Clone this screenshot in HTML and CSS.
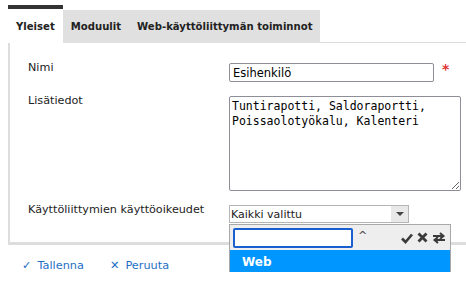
FILE: index.html
```html
<!DOCTYPE html>
<html lang="fi">
<head>
  <meta charset="UTF-8" />
  <title>Rooli</title>
  <link rel="stylesheet" href="styles.css">
</head>
<body>
  <div class="tabs">
    <div class="tab active">Yleiset</div>
    <div class="tab">Moduulit</div>
    <div class="tab">Web-käyttöliittymän toiminnot</div>
  </div>

  <div class="panel">
    <div class="form">
      <label class="label">Nimi</label>
      <div class="field">
        <input class="text-input" type="text" value="Esihenkilö">
        <span class="required">*</span>
      </div>

      <label class="label">Lisätiedot</label>
      <div class="field">
        <textarea class="textarea">Tuntirapotti, Saldoraportti, Poissaolotyökalu, Kalenteri</textarea>
      </div>

      <label class="label">Käyttöliittymien käyttöoikeudet</label>
      <div class="field">
        <div class="select">
          <span class="select-value">Kaikki valittu</span>
          <span class="select-arrow"></span>
        </div>
        <div class="dropdown">
          <div class="dropdown-head">
            <input class="search" type="text" autofocus>
            <span class="caret">^</span>
            <div class="tools">
              <svg width="12" height="12" viewBox="0 0 12 12"><path d="M1 6.5 L4.5 10 L11 2.5" fill="none" stroke="#3a3a3a" stroke-width="2.6"/></svg>
              <svg width="11" height="11" viewBox="0 0 11 11"><path d="M1.5 1.5 L9.5 9.5 M9.5 1.5 L1.5 9.5" stroke="#3a3a3a" stroke-width="2.8"/></svg>
              <svg width="14" height="12" viewBox="0 0 14 12"><path d="M1 4 H11 M8 1 L11.5 4 L8 7" fill="none" stroke="#3a3a3a" stroke-width="2"/><path d="M13 8 H3 M6 5 L2.5 8 L6 11" fill="none" stroke="#3a3a3a" stroke-width="2"/></svg>
            </div>
          </div>
          <div class="option selected">Web</div>
        </div>
      </div>
    </div>
  </div>

  <div class="actions">
    <a class="action" href="#"><span class="icon">✓</span>Tallenna</a>
    <a class="action" href="#"><span class="icon">✕</span>Peruuta</a>
  </div>
</body>
</html>
```

FILE: styles.css
```css
* {
  box-sizing: border-box;
  margin: 0;
  padding: 0;
}

body {
  font-family: 'DejaVu Sans', Verdana, sans-serif;
  font-size: 11px;
  color: #222;
  background: #fff;
}

.tabs {
  display: flex;
  align-items: flex-end;
  padding-left: 8px;
  padding-top: 5px;
}

.tab {
  height: 33px;
  padding: 0 8px;
  display: flex;
  align-items: center;
  background: #e0e0e0;
  font-weight: bold;
  font-size: 10.1px;
  color: #222;
}

.tab.active {
  height: 38px;
  background: #fff;
  border-top: 4px solid #333;
  padding-top: 1px;
}

.panel {
  margin-left: 8px;
  border-left: 2px solid #ddd;
  border-top: 1px solid #ddd;
  border-bottom: 3px solid #ddd;
  margin-top: -1px;
  padding: 20px 6px 19px 18px;
}

.form {
  display: grid;
  grid-template-columns: 201px 1fr;
  row-gap: 14px;
}

.label {
  line-height: 15px;
  margin-top: -3px;
  font-size: 11.2px;
}

.field {
  position: relative;
  display: flex;
  align-items: flex-start;
}

.text-input {
  width: 205px;
  height: 19px;
  border: 1px solid #8e8e99;
  border-radius: 2px;
  padding: 0 3px;
  font-family: 'DejaVu Sans', sans-serif;
  font-size: 11.5px;
  color: #000;
}

.required {
  color: #e03434;
  font-weight: bold;
  font-size: 14px;
  margin-left: 8px;
  line-height: 12px;
}

.textarea {
  width: 232px;
  height: 95px;
  border: 1px solid #8e8e99;
  border-radius: 2px;
  padding: 2px 2px;
  font-family: 'DejaVu Sans Mono', monospace;
  font-size: 11.5px;
  line-height: 15px;
  color: #000;
  resize: both;
}

.select {
  width: 180px;
  height: 18px;
  border: 1px solid #b5b5b5;
  display: flex;
  align-items: center;
  justify-content: space-between;
  padding-left: 1px;
}

.select-value {
  font-size: 11px;
}

.select-arrow {
  width: 17px;
  height: 16px;
  background: #e8e8e8;
  position: relative;
}

.select-arrow::after {
  content: "";
  position: absolute;
  left: 5px;
  top: 6px;
  border-left: 4px solid transparent;
  border-right: 4px solid transparent;
  border-top: 4px solid #444;
}

.dropdown {
  position: absolute;
  top: 19px;
  left: 0;
  width: 222px;
  border: 1px solid #a8a8a8;
  background: #fff;
}

.dropdown-head {
  height: 25px;
  background: #eee;
  display: flex;
  align-items: center;
  padding: 0 4px 0 3px;
}

.search {
  width: 120px;
  height: 20px;
  border: 2px solid #1a5fd0;
  border-radius: 2px;
  outline: none;
}

.caret {
  margin-left: 5px;
  font-size: 11px;
  color: #444;
  align-self: flex-start;
  margin-top: 4px;
}

.tools {
  margin-left: auto;
  display: flex;
  align-items: center;
  gap: 4px;
}

.option {
  height: 23px;
  padding-left: 12px;
  display: flex;
  align-items: center;
  font-weight: bold;
  font-size: 12px;
}

.option.selected {
  background: #0096ff;
  color: #fff;
}

.actions {
  display: flex;
  gap: 26px;
  padding: 14px 0 0 22px;
}

.action {
  color: #1f6fc5;
  text-decoration: none;
  font-size: 11.3px;
}

.action .icon {
  margin-right: 6px;
  font-weight: bold;
}
```
